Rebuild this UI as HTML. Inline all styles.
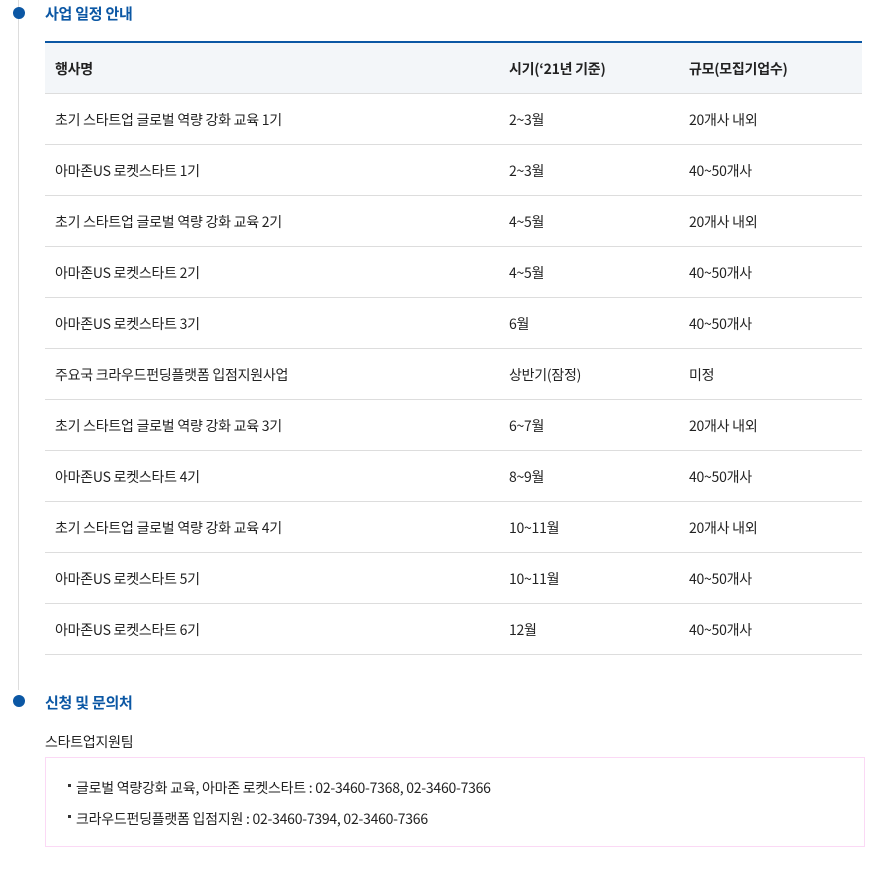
<!DOCTYPE html>
<html><head><meta charset="utf-8"><style>
body{margin:0;background:#fff;font-family:"Noto Sans CJK KR",sans-serif;color:#222;width:877px;height:869px;overflow:hidden;position:relative;letter-spacing:-0.25px}
.vl{position:absolute;left:18px;top:0;width:1px;height:690px;background:#ddd}
.dot{position:absolute;left:13px;width:12px;height:12px;border-radius:50%;background:#0b57a4}
h3{position:absolute;left:45px;margin:0;font-size:15px;font-weight:bold;color:#0b57a4;line-height:20px}
table{position:absolute;left:45px;top:41px;width:817px;border-collapse:collapse;border-top:2px solid #0b57a4;font-size:14px}
th{background:#f3f6f9;text-align:left;font-weight:bold;height:49px;padding:1px 0 0 10px;border-bottom:1px solid #ddd}
td{height:49px;padding:1px 0 0 10px;border-bottom:1px solid #ddd}
.sub{position:absolute;left:45px;top:732px;font-size:14px}
.box{position:absolute;left:45px;top:757px;width:818px;height:88px;border:1px solid #fbd9f5;font-size:14px}
.box div{position:absolute;left:30px}
.box div:before{content:"";position:absolute;left:-8px;top:6px;width:3px;height:3px;background:#333}
</style></head><body>
<div class="vl"></div>
<div class="dot" style="top:7px"></div>
<h3 style="top:4px">사업 일정 안내</h3>
<table>
<tr><th style="width:444px">행사명</th><th style="width:170px">시기(‘21년 기준)</th><th>규모(모집기업수)</th></tr>
<tr><td>초기 스타트업 글로벌 역량 강화 교육 1기</td><td>2~3월</td><td>20개사 내외</td></tr>
<tr><td>아마존US 로켓스타트 1기</td><td>2~3월</td><td>40~50개사</td></tr>
<tr><td>초기 스타트업 글로벌 역량 강화 교육 2기</td><td>4~5월</td><td>20개사 내외</td></tr>
<tr><td>아마존US 로켓스타트 2기</td><td>4~5월</td><td>40~50개사</td></tr>
<tr><td>아마존US 로켓스타트 3기</td><td>6월</td><td>40~50개사</td></tr>
<tr><td>주요국 크라우드펀딩플랫폼 입점지원사업</td><td>상반기(잠정)</td><td>미정</td></tr>
<tr><td>초기 스타트업 글로벌 역량 강화 교육 3기</td><td>6~7월</td><td>20개사 내외</td></tr>
<tr><td>아마존US 로켓스타트 4기</td><td>8~9월</td><td>40~50개사</td></tr>
<tr><td>초기 스타트업 글로벌 역량 강화 교육 4기</td><td>10~11월</td><td>20개사 내외</td></tr>
<tr><td>아마존US 로켓스타트 5기</td><td>10~11월</td><td>40~50개사</td></tr>
<tr><td>아마존US 로켓스타트 6기</td><td>12월</td><td>40~50개사</td></tr>
</table>
<div class="dot" style="top:695px"></div>
<h3 style="top:693px">신청 및 문의처</h3>
<div class="sub">스타트업지원팀</div>
<div class="box">
<div style="top:20px">글로벌 역량강화 교육, 아마존 로켓스타트 : 02-3460-7368, 02-3460-7366</div>
<div style="top:51px">크라우드펀딩플랫폼 입점지원 : 02-3460-7394, 02-3460-7366</div>
</div>
</body></html>
